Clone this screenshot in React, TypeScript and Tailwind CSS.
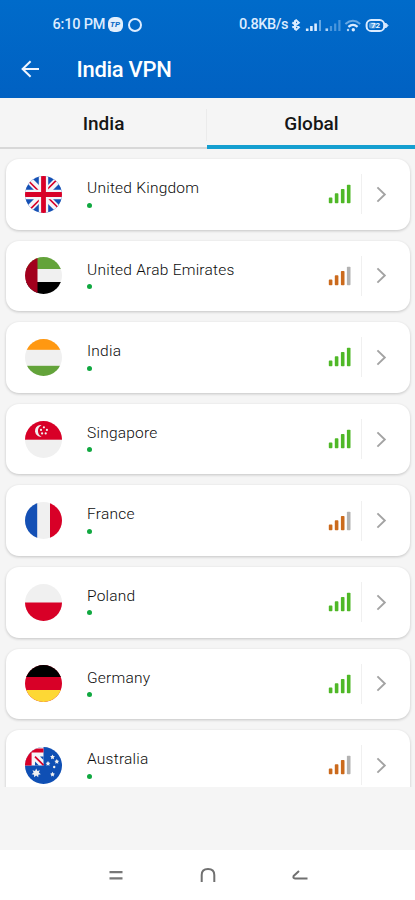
import type { ReactNode } from "react";

type Server = {
    name: string;
    flag: ReactNode;
    strong: boolean;
};

const UnionJack = () => (
    <>
        <rect width="37" height="37" fill="#1450b5" />
        <path d="M0 0L37 37M37 0L0 37" stroke="#f4f4f8" strokeWidth="7" />
        <path d="M3.6 5L16 17.4M21 19.6L33.4 32M32 3.6L19.6 16M17.4 21L5 33.4" stroke="#d80027" strokeWidth="1.6" />
        <path d="M18.5 0V37M0 18.5H37" stroke="#f4f4f8" strokeWidth="9.4" />
        <path d="M18.5 0V37M0 18.5H37" stroke="#d80027" strokeWidth="4.8" />
    </>
);

const Emirates = () => (
    <>
        <rect width="37" height="37" fill="#f0f0f0" />
        <rect width="37" height="12" fill="#63a33a" />
        <rect y="25" width="37" height="12" fill="#000" />
        <rect width="12.5" height="37" fill="#a2001d" />
    </>
);

const IndiaFlag = () => (
    <>
        <rect width="37" height="37" fill="#f0f0f0" />
        <rect width="37" height="10.8" fill="#ff9811" />
        <rect y="26.8" width="37" height="10.2" fill="#63a33a" />
    </>
);

const Singapore = () => (
    <>
        <rect width="37" height="37" fill="#f0f0f0" />
        <rect width="37" height="18.7" fill="#d80027" />
        <path d="M15 4a5.8 5.8 0 1 0 1.6 11.6a6.3 6.3 0 0 1 0-11.4z" fill="#f0f0f0" />
        <g fill="#f0f0f0">
            <circle cx="18.9" cy="6.3" r="1.1" />
            <circle cx="16" cy="8.9" r="1.1" />
            <circle cx="21.9" cy="8.9" r="1.1" />
            <circle cx="17.1" cy="12.4" r="1.1" />
            <circle cx="20.7" cy="12.4" r="1.1" />
        </g>
    </>
);

const France = () => (
    <>
        <rect width="37" height="37" fill="#f0f0f0" />
        <rect width="12.2" height="37" fill="#1450b5" />
        <rect x="25" width="12" height="37" fill="#d80027" />
    </>
);

const Poland = () => (
    <>
        <rect width="37" height="37" fill="#f0f0f0" />
        <rect y="18.5" width="37" height="18.5" fill="#d80027" />
    </>
);

const Germany = () => (
    <>
        <rect width="37" height="37" fill="#d80027" />
        <rect width="37" height="12" fill="#000" />
        <rect y="25" width="37" height="12" fill="#fdd835" />
    </>
);

const Australia = () => (
    <>
        <rect width="37" height="37" fill="#0f4fb4" />
        <rect width="18.5" height="18.5" fill="#f4f4f8" />
        <path d="M0 18.5V1.6H18.5V5.4H6.6V18.5z" fill="#d80027" />
        <path d="M10 18.5V14.4L14 18.5zM18.5 9.6H15L18.5 13z" fill="#0f4fb4" />
        <path d="M10 9.6L18.5 18.2" stroke="#d80027" strokeWidth="1.7" />
        <g fill="#f0f0f0">
            <path d="M11.2 21.6l1.2 2.3 2.5-.7-1.1 2.4 2 1.6-2.5.6v2.4l-2.1-1.6-2.1 1.6v-2.4l-2.5-.6 2-1.6-1.1-2.4 2.5.7z" />
            <path d="M23 14l.8 1.5 1.6.4-1.2 1.2.3 1.7-1.5-.8-1.5.8.3-1.7-1.2-1.2 1.6-.4z" />
            <path d="M27.5 7.4l.8 1.5 1.6.4-1.2 1.2.3 1.7-1.5-.8-1.5.8.3-1.7-1.2-1.2 1.6-.4z" />
            <path d="M31.8 12l.8 1.5 1.6.4-1.2 1.2.3 1.7-1.5-.8-1.5.8.3-1.7-1.2-1.2 1.6-.4z" />
            <path d="M27.5 24.8l.8 1.5 1.6.4-1.2 1.2.3 1.7-1.5-.8-1.5.8.3-1.7-1.2-1.2 1.6-.4z" />
            <circle cx="29.2" cy="20" r="1.2" />
        </g>
    </>
);

const servers: Server[] = [
    { name: "United Kingdom", flag: <UnionJack />, strong: true },
    { name: "United Arab Emirates", flag: <Emirates />, strong: false },
    { name: "India", flag: <IndiaFlag />, strong: true },
    { name: "Singapore", flag: <Singapore />, strong: true },
    { name: "France", flag: <France />, strong: false },
    { name: "Poland", flag: <Poland />, strong: true },
    { name: "Germany", flag: <Germany />, strong: true },
    { name: "Australia", flag: <Australia />, strong: false },
];

function Signal({ strong }: { strong: boolean }) {
    const color = strong ? "#4fb827" : "#cb6a1c";
    return (
        <svg width="23" height="20" viewBox="0 0 23 20" className="shrink-0">
            <rect x="0.8" y="13.6" width="3.6" height="5.6" rx="0.8" fill={color} />
            <rect x="6.8" y="9.3" width="3.6" height="9.9" rx="0.8" fill={color} />
            <rect x="12.9" y="5" width="3.6" height="14.2" rx="0.8" fill={color} />
            <rect x="18.9" y="0.7" width="3.6" height="18.5" rx="0.8" fill={strong ? color : "#b2b2b2"} />
        </svg>
    );
}

function ServerRow({ server }: { server: Server }) {
    return (
        <div className="flex h-[70.6px] shrink-0 items-center rounded-[13px] bg-white pl-[19px] pr-[23px] shadow-[0_1px_3px_rgba(0,0,0,0.2)]">
            <svg width="37" height="37" viewBox="0 0 37 37" className="shrink-0 rounded-full">
                {server.flag}
            </svg>
            <div className="ml-[25.5px] flex h-full flex-1 flex-col pt-[19px]">
                <div className="whitespace-nowrap text-[15.5px] font-light leading-[20px] tracking-[0.23px] text-[#0c0c0c]">{server.name}</div>
                <div className="mt-[4.5px] size-[5px] rounded-full bg-[#10a840]"></div>
            </div>
            <Signal strong={server.strong} />
            <div className="ml-[10px] h-[40px] w-px bg-[#f0f0f0]"></div>
            <svg width="11" height="17" viewBox="0 0 11 17" fill="none" stroke="#a3a3a3" strokeWidth="1.9" className="ml-[14px] shrink-0">
                <path d="M1.4 1.4L8.8 8.5L1.4 15.6" />
            </svg>
        </div>
    );
}

function StatusBar() {
    return (
        <div className="flex h-[49px] items-center pl-[52.5px] pr-[26px] text-[14.5px] font-medium text-[#dcecff]">
            <span className="w-[55px] whitespace-nowrap tracking-[-0.2px]">6:10 PM</span>
            <span className="flex size-[15px] items-center justify-center rounded-[6px] bg-[#e3effc] text-[8px] font-bold italic text-[#0867c5]">TP</span>
            <span className="ml-[5px] size-[14px] rounded-full border-[2.5px] border-[#dcecff]"></span>
            <span className="ml-auto w-[50px] whitespace-nowrap tracking-[-0.4px]">0.8KB/s</span>
            <svg width="100" height="18" viewBox="0 0 100 18" fill="none" className="shrink-0">
                {/* bluetooth */}
                <path d="M3.4 6.4L9.8 11.4L7.2 13.8L6 13V5L7.2 4.2L9.8 6.6L3.4 11.6" stroke="#dcecff" strokeWidth="2" />
                {/* both sims */}
                <path d="M18.2 12.4V15M22.4 10V15M26.6 7.4V15" stroke="#dcecff" strokeWidth="2.6" />
                <path d="M31 4V15" stroke="#65a7e3" strokeWidth="2" />
                <path d="M37.8 12.4V15" stroke="#b4d5f5" strokeWidth="2.6" />
                <path d="M42 10V15M46.2 7.4V15M50.4 4V15" stroke="#4b96dc" strokeWidth="2.2" />
                {/* wifi */}
                <path d="M56.4 8Q64 1.6 71.2 8" stroke="#68a9e5" strokeWidth="2" />
                <path d="M59.4 10.9Q64 6.8 68.6 10.9" stroke="#dcecff" strokeWidth="2.2" />
                <circle cx="64.3" cy="13.8" r="1.7" fill="#dcecff" />
                <circle cx="59" cy="14" r="1.2" fill="#b4d5f5" />
                {/* battery */}
                <rect x="77.6" y="4" width="17.6" height="11" rx="4.6" stroke="#dcecff" strokeWidth="2" />
                <rect x="80" y="6.4" width="7" height="6.2" rx="2" fill="#5fa2e0" />
                <path d="M96.6 7L99 9.5L96.6 12z" fill="#dcecff" stroke="#dcecff" />
                <text x="82" y="12.4" fontSize="8" fontWeight="700" fill="#eff7ff">72</text>
            </svg>
        </div>
    );
}

export default function App() {
    return (
        <div className="flex h-[900px] w-[415px] flex-col overflow-hidden bg-[#f5f5f5] font-['Roboto','Liberation_Sans',sans-serif]">
            <header className="h-[97.5px] shrink-0 bg-linear-to-b from-[#006bca] to-[#0161c2]">
                <StatusBar />
                <div className="flex h-[40px] items-center pl-[21px] text-white">
                    <svg width="19" height="18" viewBox="0 0 19 18" fill="none" stroke="#f1f6ff" strokeWidth="2">
                        <path d="M18 9H1.8M9.6 1.2L1.6 9L9.6 16.8" />
                    </svg>
                    <h1 className="ml-[36.5px] text-[22px] font-medium tracking-[-0.3px]">India VPN</h1>
                </div>
            </header>
            <div className="flex h-[51px] shrink-0 text-[19px] font-medium text-[#161616]">
                <div className="flex flex-1 items-center border-b-2 border-[#d8d8d8] pt-[5px]">
                    <span className="flex-1 pl-px text-center">India</span>
                    <span className="h-[32px] w-px bg-[#ebebeb]"></span>
                </div>
                <div className="flex flex-1 items-center justify-center border-b-[4px] border-[#159fd0] pt-[7px] pl-px">Global</div>
            </div>
            <main className="flex h-[638px] shrink-0 flex-col gap-[11px] overflow-hidden px-[5.5px] pt-[10.5px]">
                {servers.map((s) => (
                    <ServerRow key={s.name} server={s} />
                ))}
            </main>
            <nav className="mt-auto flex h-[50px] shrink-0 items-center justify-center gap-[76px] bg-white">
                <svg width="16" height="18" viewBox="0 0 16 18" fill="none" stroke="#777" strokeWidth="2.2">
                    <path d="M1.5 6.2H14.5M1.5 12.4H14.5" />
                </svg>
                <svg width="16" height="18" viewBox="0 0 16 18" fill="none" stroke="#707070" strokeWidth="2">
                    <path d="M1.7 16V9Q1.7 3 8 3Q14.3 3 14.3 9V16" />
                </svg>
                <svg width="16" height="18" viewBox="0 0 16 18" fill="none" stroke="#707070" strokeWidth="2" strokeLinejoin="round">
                    <path d="M7 5L1.6 10Q0.8 12.4 3 12.4H15.5" />
                </svg>
            </nav>
        </div>
    );
}
